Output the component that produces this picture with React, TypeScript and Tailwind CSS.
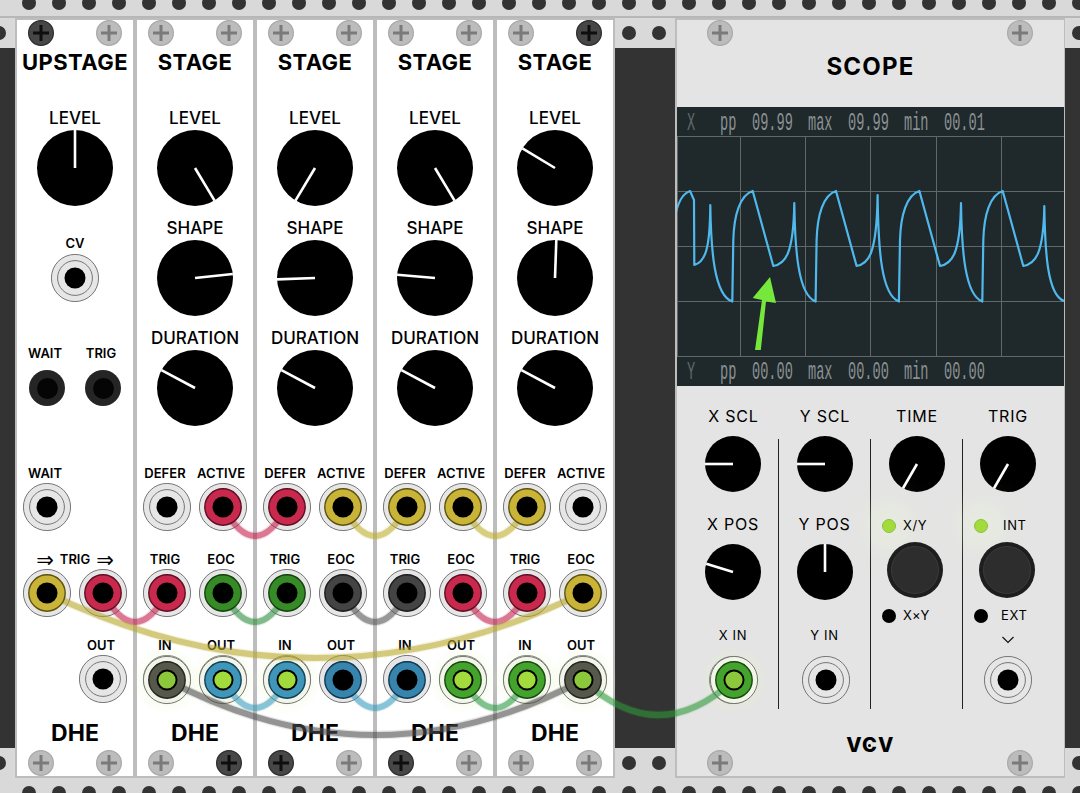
import React from "react";

const dots = Array.from({ length: 37 });

function Dots({ className }: { className: string }) {
  return (
    <div className={`flex gap-[16px] ${className}`}>
      {dots.map((_, i) => (
        <span key={i} className="w-[14px] h-[14px] rounded-full bg-[#333333] shrink-0" />
      ))}
    </div>
  );
}

function Screw({ dark }: { dark?: boolean }) {
  return (
    <svg width="26" height="26" viewBox="0 0 26 26" className="block">
      <circle cx="13" cy="13" r="12.4" fill={dark ? "#474747" : "#bcbcbc"} stroke={dark ? "#2c2c2c" : "#a9a9a9"} strokeWidth="1.2" />
      <path d="M13 5v16M5 13h16" stroke={dark ? "#0e0e0e" : "#7a7a7a"} strokeWidth="3" />
    </svg>
  );
}

function ScrewRow({ left, right, className = "px-[11px]" }: { left?: boolean; right?: boolean; className?: string }) {
  return (
    <div className={`h-[26px] flex justify-between shrink-0 ${className}`}>
      <Screw dark={left} />
      <Screw dark={right} />
    </div>
  );
}

function Knob({ size, angle }: { size: number; angle: number }) {
  const r = size / 2;
  const rad = (angle * Math.PI) / 180;
  return (
    <svg width={size} height={size} viewBox={`0 0 ${size} ${size}`} className="block">
      <circle cx={r} cy={r} r={r} fill="#000" />
      <line x1={r} y1={r} x2={r + r * Math.sin(rad)} y2={r - r * Math.cos(rad)} stroke="#fff" strokeWidth="2.6" />
    </svg>
  );
}

function Jack() {
  return (
    <svg width="48" height="48" viewBox="0 0 48 48" className="block">
      <circle cx="24" cy="24" r="23.6" fill="#e6e6e6" stroke="#757575" strokeWidth="1" />
      <circle cx="24" cy="24" r="17.4" fill="#e6e6e6" stroke="#757575" strokeWidth="1" />
      <circle cx="24" cy="24" r="10.5" fill="#000" />
    </svg>
  );
}

function DarkJack() {
  return (
    <div className="w-[36px] h-[36px] rounded-full bg-[#252525] flex items-center justify-center">
      <div className="w-[21px] h-[21px] rounded-full bg-[#050505]" />
    </div>
  );
}

function KnobBlock({ label, angle }: { label: string; angle: number }) {
  return (
    <div className="flex flex-col items-center">
      <div className="h-[20px] pt-[2px] flex items-center text-[17px] font-medium text-black whitespace-nowrap">{label}</div>
      <div className="mt-[2px]">
        <Knob size={76} angle={angle} />
      </div>
    </div>
  );
}

function JackLabel({ children }: { children: React.ReactNode }) {
  return (
    <div className="h-[16px] pt-[2px] flex items-center justify-center text-[13px] font-semibold text-black whitespace-nowrap -translate-x-[2px]">
      {children}
    </div>
  );
}

function JackCell({ label }: { label: string }) {
  return (
    <div className="w-[48px] flex flex-col items-center">
      <JackLabel>{label}</JackLabel>
      <div className="mt-[2px]">
        <Jack />
      </div>
    </div>
  );
}

function Dhe() {
  return (
    <div className="mt-[14px] h-[30px] pt-[3px] flex items-center justify-center text-[23px] font-bold text-black">DHE</div>
  );
}

function Panel({ children }: { children: React.ReactNode }) {
  return <div className="w-[116px] h-[756px] my-[2px] bg-white flex flex-col shrink-0">{children}</div>;
}

function Title({ text }: { text: string }) {
  return (
    <div className="h-[30px] pt-[2px] flex items-center justify-center text-[22px] tracking-[0.02em] font-bold text-black whitespace-nowrap">
      {text}
    </div>
  );
}

function Upstage() {
  return (
    <Panel>
      <ScrewRow left />
      <Title text="UPSTAGE" />
      <div className="mt-[32px]">
        <KnobBlock label="LEVEL" angle={0} />
      </div>
      <div className="mt-[29px] flex flex-col items-center">
        <div className="h-[16px] pt-[2px] flex items-center text-[13px] font-semibold">CV</div>
        <div className="mt-[3px]">
          <Jack />
        </div>
      </div>
      <div className="mt-[43px] grid grid-cols-[48px_48px] gap-x-2 justify-center">
        <JackLabel>WAIT</JackLabel>
        <JackLabel>TRIG</JackLabel>
        <div className="mt-[9px] flex justify-center">
          <DarkJack />
        </div>
        <div className="mt-[9px] flex justify-center">
          <DarkJack />
        </div>
      </div>
      <div className="mt-[59px] grid grid-cols-[48px_48px] gap-x-2 gap-y-[20px] justify-center">
        <JackCell label="WAIT" />
        <div />
        <div className="col-span-2 flex flex-col">
          <div className="h-[16px] pt-[2px] flex items-center justify-center gap-[6px] text-[13px] font-semibold whitespace-nowrap">
            <span className="text-[21px] font-['DejaVu_Sans',sans-serif] font-normal leading-none">⇒</span>
            <span>TRIG</span>
            <span className="text-[21px] font-['DejaVu_Sans',sans-serif] font-normal leading-none">⇒</span>
          </div>
          <div className="mt-[2px] flex gap-x-2">
            <Jack />
            <Jack />
          </div>
        </div>
        <div />
        <JackCell label="OUT" />
      </div>
      <Dhe />
      <div className="mt-auto">
        <ScrewRow />
      </div>
    </Panel>
  );
}

function Stage({ level, shape, top, bottom }: { level: number; shape: number; top?: [boolean, boolean]; bottom?: [boolean, boolean] }) {
  return (
    <Panel>
      <ScrewRow left={top?.[0]} right={top?.[1]} />
      <Title text="STAGE" />
      <div className="mt-[32px] flex flex-col gap-[12px]">
        <KnobBlock label="LEVEL" angle={level} />
        <KnobBlock label="SHAPE" angle={shape} />
        <KnobBlock label="DURATION" angle={-62} />
      </div>
      <div className="mt-[39px] grid grid-cols-[48px_48px] gap-x-2 gap-y-[20px] justify-center">
        <JackCell label="DEFER" />
        <JackCell label="ACTIVE" />
        <JackCell label="TRIG" />
        <JackCell label="EOC" />
        <JackCell label="IN" />
        <JackCell label="OUT" />
      </div>
      <Dhe />
      <div className="mt-auto">
        <ScrewRow left={bottom?.[0]} right={bottom?.[1]} />
      </div>
    </Panel>
  );
}

function Gap({ className, dotsClass }: { className: string; dotsClass: string }) {
  return (
    <div className={`h-[760px] flex flex-col shrink-0 ${className}`}>
      <div className="h-[30px] bg-[#d9d9d9] overflow-hidden flex items-center">
        <Dots className={dotsClass} />
      </div>
      <div className="flex-1 bg-[#333333]" />
      <div className="h-[30px] bg-[#d9d9d9] overflow-hidden flex items-center">
        <Dots className={dotsClass} />
      </div>
    </div>
  );
}

function ReadoutRow({ axis, pp, max, min, className }: { axis: string; pp: string; max: string; min: string; className: string }) {
  const cells = [
    { w: "w-[33px]", t: axis, c: "text-[#5f6768]" },
    { w: "w-[32px]", t: "pp", c: "text-[#8b9192]" },
    { w: "w-[56px]", t: pp, c: "text-[#8b9192]" },
    { w: "w-[40px]", t: "max", c: "text-[#8b9192]" },
    { w: "w-[56px]", t: max, c: "text-[#8b9192]" },
    { w: "w-[40px]", t: "min", c: "text-[#8b9192]" },
    { w: "w-[56px]", t: min, c: "text-[#8b9192]" },
  ];
  return (
    <div className={`h-[29px] pl-[10px] flex items-center font-['Liberation_Mono',monospace] text-[25px] leading-none ${className}`}>
      {cells.map((cell, i) => (
        <span key={i} className={`${cell.w} ${cell.c} origin-left scale-x-[0.545] whitespace-pre`}>
          {cell.t}
        </span>
      ))}
    </div>
  );
}

// waveform is five repeats of one cycle, only the spike height drifts
function wavePath() {
  const ox = 677;
  const oy = 136;
  const p = 83.33;
  const pt = (x: number, y: number) => `${(x - ox).toFixed(1)} ${(y - oy).toFixed(1)}`;
  let d = `M${pt(676, 212)} C${pt(679, 200)} ${pt(684, 193)} ${pt(690, 191)} L${pt(694, 200)} L${pt(694.3, 265)} `;
  d += `C${pt(705, 262)} ${pt(710, 250)} ${pt(710.3, 205)} C${pt(711, 250)} ${pt(714, 295)} ${pt(732.3, 301.5)} `;
  const spikes = [203, 195, 203, 206];
  spikes.forEach((s, i) => {
    const k = i * p;
    d += `L${pt(733.3 + k, 240)} C${pt(734 + k, 215)} ${pt(740 + k, 195)} ${pt(752.7 + k, 191)} `;
    d += `L${pt(773.3 + k, 266)} C${pt(785 + k, 264)} ${pt(793.5 + k, 255)} ${pt(794.3 + k, s)} `;
    if (i < 3) {
      d += `C${pt(795 + k, 250)} ${pt(798 + k, 295)} ${pt(815.6 + k, 301.5)} `;
    } else {
      d += `C${pt(795 + k, 250)} ${pt(797 + k, 295)} ${pt(814 + k, 301)} `;
    }
  });
  return d;
}

function Display() {
  const vs = [63, 128, 193, 259, 324];
  const hs = [0.5, 55.5, 110.5, 165.5, 220.5];
  return (
    <div className="h-[279px] bg-[#1f282b] flex flex-col">
      <ReadoutRow axis="X" pp="09.99" max="09.99" min="00.01" className="pt-[3px]" />
      <svg width="387" height="221" viewBox="0 0 387 221" className="block">
        <line x1="0.5" y1="0" x2="0.5" y2="221" stroke="#5f6768" />
        {vs.map((x) => (
          <line key={x} x1={x + 0.5} y1="0" x2={x + 0.5} y2="221" stroke="#5f6768" />
        ))}
        {hs.map((y) => (
          <line key={y} x1="0" y1={y} x2="387" y2={y} stroke="#5f6768" />
        ))}
        <path d={wavePath()} fill="none" stroke="#4fb8ec" strokeWidth="2.2" strokeLinejoin="round" />
      </svg>
      <ReadoutRow axis="Y" pp="00.00" max="00.00" min="00.00" className="pt-[2px]" />
    </div>
  );
}

function ControlLabel({ children }: { children: React.ReactNode }) {
  return <div className="h-[16px] flex items-center justify-center text-[16px] tracking-[0.05em] text-black whitespace-nowrap">{children}</div>;
}

function SmallLabel({ children }: { children: React.ReactNode }) {
  return <div className="h-[16px] flex items-center justify-center text-[13px] tracking-[0.05em] text-black whitespace-nowrap">{children}</div>;
}

function Led({ on }: { on?: boolean }) {
  return on ? (
    <span className="block w-[14px] h-[14px] rounded-full bg-[#a2dc3c] border border-[#8fbf40] shadow-[0_0_30px_14px_rgba(240,250,215,0.45)]" />
  ) : (
    <span className="block w-[14px] h-[14px] rounded-full bg-black" />
  );
}

function PushButton() {
  return (
    <div className="w-[56px] h-[56px] rounded-full bg-[#1e1e1e] flex items-center justify-center">
      <div className="w-[48px] h-[48px] rounded-full bg-[#2d2d2d] border border-[#3a3a3a]" />
    </div>
  );
}

function Scope() {
  return (
    <div className="w-[387px] h-[756px] my-[2px] ml-[2px] bg-[#e4e4e4] flex flex-col shrink-0">
      <ScrewRow className="pl-[30px] pr-[31px]" />
      <div className="h-[40px] pt-[1px] flex items-center justify-center text-[24px] font-bold tracking-[0.05em] text-black">SCOPE</div>
      <div className="mt-[21px]">
        <Display />
      </div>

      <div className="mt-[22px] grid grid-cols-[102px_92px_92px_101px]">
        <div className="pl-[11px]"><ControlLabel>X SCL</ControlLabel></div>
        <ControlLabel>Y SCL</ControlLabel>
        <ControlLabel>TIME</ControlLabel>
        <div className="pr-[11px]"><ControlLabel>TRIG</ControlLabel></div>
      </div>

      <div className="mt-[15px] h-[270px] grid grid-cols-[102px_92px_92px_101px]">
        <div className="pl-[11px] border-r border-[#222] flex flex-col items-center">
          <div className="-mt-[3px]"><Knob size={56} angle={-90} /></div>
          <div className="mt-[24px]"><ControlLabel>X POS</ControlLabel></div>
          <div className="mt-[12px]"><Knob size={56} angle={-73} /></div>
          <div className="mt-[28px]"><SmallLabel>X IN</SmallLabel></div>
          <div className="mt-[12px]"><Jack /></div>
        </div>
        <div className="border-r border-[#222] flex flex-col items-center">
          <div className="-mt-[3px]"><Knob size={56} angle={-90} /></div>
          <div className="mt-[24px]"><ControlLabel>Y POS</ControlLabel></div>
          <div className="mt-[12px]"><Knob size={56} angle={0} /></div>
          <div className="mt-[28px]"><SmallLabel>Y IN</SmallLabel></div>
          <div className="mt-[12px] translate-x-[1px]"><Jack /></div>
        </div>
        <div className="border-r border-[#222] flex flex-col items-center">
          <div className="-mt-[3px]"><Knob size={56} angle={-150} /></div>
          <div className="mt-[26px] h-[16px] self-start pl-[11px] flex items-center gap-[7px] text-[13px] tracking-[0.05em]">
            <Led on />
            <span>X/Y</span>
          </div>
          <div className="mt-[8px] -translate-x-[2px]"><PushButton /></div>
          <div className="mt-[10px] h-[16px] self-start pl-[11px] flex items-center gap-[7px] text-[13px] tracking-[0.05em]">
            <Led />
            <span>X×Y</span>
          </div>
        </div>
        <div className="pr-[11px] flex flex-col items-center">
          <div className="-mt-[3px]"><Knob size={56} angle={-150} /></div>
          <div className="mt-[26px] h-[16px] self-start pl-[11px] flex items-center gap-[15px] text-[13px] tracking-[0.05em]">
            <Led on />
            <span>INT</span>
          </div>
          <div className="mt-[8px] -translate-x-[1px]"><PushButton /></div>
          <div className="mt-[10px] h-[16px] self-start pl-[11px] flex items-center gap-[13px] text-[13px] tracking-[0.05em]">
            <Led />
            <span>EXT</span>
          </div>
          <svg width="14" height="8" viewBox="0 0 14 8" className="block mt-[12px]">
            <path d="M1.5 1l5.5 5.5L12.5 1" fill="none" stroke="#111" strokeWidth="1.2" />
          </svg>
          <div className="mt-[12px]"><Jack /></div>
        </div>
      </div>

      <div className="mt-[31px] h-[10px] flex items-center justify-center">
        <div className="relative text-[20px] leading-none font-extrabold tracking-[0.06em] text-black">
          VCV
          <span className="absolute left-[22px] top-[9px] w-[3px] h-[3px] rounded-full bg-black" />
        </div>
      </div>
      <div className="mt-auto">
        <ScrewRow className="pl-[30px] pr-[31px]" />
      </div>
    </div>
  );
}

type Cable = { x1: number; x2: number; y: number; sag: number; color: string };

const cables: Cable[] = [
  { x1: 223, x2: 287, y: 507, sag: 29, color: "#c3204d" },
  { x1: 343, x2: 407, y: 507, sag: 29, color: "#bfae2e" },
  { x1: 463, x2: 527, y: 507, sag: 29, color: "#bfae2e" },
  { x1: 103, x2: 167, y: 593, sag: 29, color: "#c3204d" },
  { x1: 223, x2: 287, y: 593, sag: 29, color: "#2f8f3f" },
  { x1: 343, x2: 407, y: 593, sag: 29, color: "#555555" },
  { x1: 463, x2: 527, y: 593, sag: 29, color: "#c3204d" },
  { x1: 47, x2: 583, y: 593, sag: 65, color: "#b8a72a" },
  { x1: 223, x2: 287, y: 680, sag: 28, color: "#3c9dbd" },
  { x1: 343, x2: 407, y: 680, sag: 28, color: "#3c9dbd" },
  { x1: 463, x2: 527, y: 680, sag: 28, color: "#2f9a44" },
  { x1: 167, x2: 583, y: 680, sag: 55, color: "#4d4d4d" },
  { x1: 583, x2: 734, y: 680, sag: 35, color: "#2f9a3c" },
];

type Plug = { x: number; y: number; fill: string; edge: string; tip?: string };

const yellow = { fill: "#c9b437", edge: "#5c5210" };
const red = { fill: "#c8294d", edge: "#5e0e22" };
const green = { fill: "#368b27", edge: "#12420c" };
const coal = { fill: "#444444", edge: "#1c1c1c" };
const blue = { fill: "#3784ad", edge: "#0f3a56" };
const teal = { fill: "#3f96b8", edge: "#0f4256", tip: "#a2dc3c" };
const lime = { fill: "#44a32c", edge: "#144a0c", tip: "#a2dc3c" };
const ash = { fill: "#55584b", edge: "#242520", tip: "#8cc83c" };

const plugs: Plug[] = [
  { x: 223, y: 507, ...red },
  { x: 287, y: 507, ...red },
  { x: 343, y: 507, ...yellow },
  { x: 407, y: 507, ...yellow },
  { x: 463, y: 507, ...yellow },
  { x: 527, y: 507, ...yellow },
  { x: 47, y: 593, ...yellow },
  { x: 103, y: 593, ...red },
  { x: 167, y: 593, ...red },
  { x: 223, y: 593, ...green },
  { x: 287, y: 593, ...green },
  { x: 343, y: 593, ...coal },
  { x: 407, y: 593, ...coal },
  { x: 463, y: 593, ...red },
  { x: 527, y: 593, ...red },
  { x: 583, y: 593, ...yellow },
  { x: 167, y: 680, ...ash },
  { x: 223, y: 680, ...teal },
  { x: 287, y: 680, ...teal },
  { x: 343, y: 680, ...blue },
  { x: 407, y: 680, ...blue },
  { x: 463, y: 680, ...lime },
  { x: 527, y: 680, ...lime },
  { x: 583, y: 680, ...ash },
  { x: 734, y: 680, fill: "#44a32c", edge: "#144a0c", tip: "#8cc83c" },
];

function CableLayer() {
  return (
    <svg width="1080" height="793" viewBox="0 0 1080 793" className="absolute inset-0 pointer-events-none">
      <defs>
        <radialGradient id="plug-glow">
          <stop offset="0.6" stopColor="#e6f5c8" stopOpacity="0.3" />
          <stop offset="1" stopColor="#e6f5c8" stopOpacity="0" />
        </radialGradient>
      </defs>
      {plugs
        .filter((p) => p.tip)
        .map((p) => (
          <g key={p.x}>
            <circle cx={p.x} cy={p.y} r="34" fill="url(#plug-glow)" />
            <circle cx={p.x} cy={p.y} r="23.6" fill="#f3f5ea" stroke="#75786e" strokeWidth="1" />
          </g>
        ))}
      {cables.map((c, i) => {
        const d = `M${c.x1} ${c.y} Q${(c.x1 + c.x2) / 2} ${c.y + c.sag * 2} ${c.x2} ${c.y}`;
        return (
          <g key={i} fill="none" strokeLinecap="round">
            <path d={d} stroke={c.color} strokeWidth="8.5" opacity="0.14" />
            <path d={d} stroke={c.color} strokeWidth="6" opacity="0.54" />
          </g>
        );
      })}
      {plugs.map((p) => (
        <g key={`${p.x}-${p.y}`}>
          <circle cx={p.x} cy={p.y} r="18.2" fill={p.fill} stroke={p.edge} strokeWidth="1.4" />
          <circle cx={p.x} cy={p.y} r="10.5" fill="#000" />
          {p.tip && <circle cx={p.x} cy={p.y} r="8.6" fill={p.tip} />}
        </g>
      ))}
      <polygon points="755,350 760.8,350 766,301.5 776,303 770,277 752.7,298 762,300" fill="#76e73b" />
    </svg>
  );
}

export default function App() {
  return (
    <div className="relative w-[1080px] h-[793px] overflow-hidden bg-[#d9d9d9] font-['Inter',sans-serif]">
      <div className="h-[16px] overflow-hidden">
        <Dots className="-mt-[4px] ml-[22px]" />
      </div>
      <div className="h-[2px] bg-[#b7b7b7]" />
      <div className="h-[760px] flex bg-[#bdbdbd]">
        <Gap className="w-[15px]" dotsClass="-ml-[8px]" />
        <div className="ml-[2px] flex gap-[4px]">
          <Upstage />
          <Stage level={149} shape={84} bottom={[false, true]} />
          <Stage level={-149} shape={-92} bottom={[true, false]} />
          <Stage level={149} shape={-85} bottom={[true, false]} />
          <Stage level={-59} shape={2} top={[false, true]} />
        </div>
        <Gap className="ml-[2px] w-[60px]" dotsClass="ml-[7px]" />
        <Scope />
        <Gap className="ml-[1px] w-[15px]" dotsClass="ml-[7px]" />
      </div>
      <div className="h-[15px] overflow-hidden">
        <Dots className="mt-[8px] ml-[22px]" />
      </div>
      <CableLayer />
    </div>
  );
}
